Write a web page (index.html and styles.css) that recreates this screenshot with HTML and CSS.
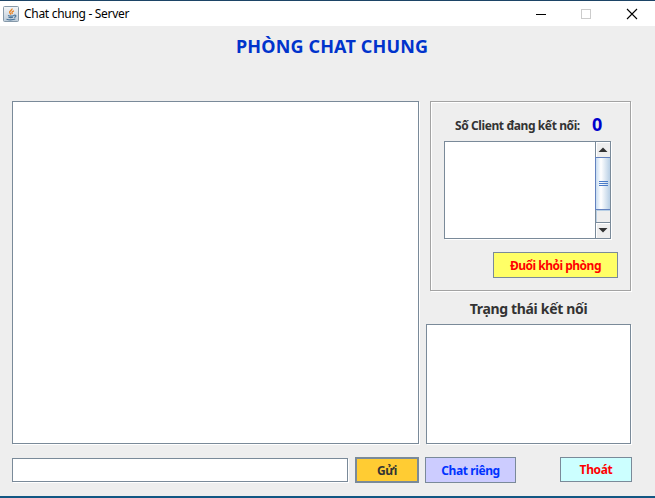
FILE: index.html
```
<!DOCTYPE html>
<html lang="vi">
<head>
<meta charset="utf-8">
<title>Chat chung - Server</title>
<link rel="stylesheet" href="styles.css">
</head>
<body>
<div class="window">
  <header class="titlebar">
    <svg class="java" width="16" height="16" viewBox="0 0 16 16">
      <defs><linearGradient id="g" x1="0" y1="0" x2="0" y2="1"><stop offset="0" stop-color="#f4f6f8"/><stop offset="1" stop-color="#bccbd8"/></linearGradient></defs>
      <rect x=".5" y=".5" width="15" height="15" rx="1" fill="url(#g)" stroke="#8699a9"/>
      <path d="M9 2.500c.6 2-3.300 2.300-2.300 4.200L8 8.500M11 4.800C8.800 5.500 8.600 6.300 9.400 8" fill="none" stroke="#e98324" stroke-width="1.300"/>
      <path d="M5 9.500c1.500.6 4.500.6 6 0M5.500 11.300c1.300.4 3.300.4 4.500 0M3.500 13.300c2.500.7 6.500.6 8.800-.2M11 9.200c2.700-.5 2.400 1.700.2 2.200" fill="none" stroke="#48749a" stroke-width="1.100"/>
    </svg>
    <span class="caption">Chat chung - Server</span>
    <svg class="controls" width="103" height="12" viewBox="0 0 103 12" fill="none">
      <path d="M0 6.500h10" stroke="#000"/>
      <rect x="45.500" y="1.500" width="9" height="9" stroke="#ccc"/>
      <path d="M91 1l10 10M101 1L91 11" stroke="#000" stroke-width="1.100"/>
    </svg>
  </header>
  <main class="content">
    <h1 class="heading">PHÒNG CHAT CHUNG</h1>
    <div class="columns">
      <div class="box messages"></div>
      <aside class="side">
        <section class="clients">
          <div class="count"><span class="count-label">Số Client đang kết nối:</span><span class="count-value">0</span></div>
          <div class="box list">
            <div class="scrollbar">
              <div class="arrow"><svg width="10" height="5" viewBox="0 0 10 5"><path d="M.5 5L5 .5 9.500 5z" fill="#333"/></svg></div>
              <div class="thumb"><i></i><i></i><i></i></div>
              <div class="track"></div>
              <div class="arrow down"><svg width="10" height="5" viewBox="0 0 10 5"><path d="M.5 0L5 4.500 9.500 0z" fill="#333"/></svg></div>
            </div>
          </div>
          <button class="btn kick"><span>Đuổi khỏi phòng</span></button>
        </section>
        <h2 class="status-title"><span>Trạng thái kết nối</span></h2>
        <div class="box status"></div>
      </aside>
    </div>
    <footer class="actions">
      <input class="box entry" type="text" aria-label="Tin nhắn">
      <button class="btn send"><span>Gửi</span></button>
      <button class="btn private"><span>Chat riêng</span></button>
      <button class="btn exit"><span>Thoát</span></button>
    </footer>
  </main>
</div>
</body>
</html>
```
FILE: styles.css
```
* { box-sizing: border-box; }
body { margin: 0; font-family: "Noto Sans", "Open Sans", sans-serif; overflow: hidden; }
.window {
  width: 655px; height: 498px; display: flex; flex-direction: column;
  background: #eee;
  border-top: 1px solid #1c4466;
}
.titlebar { height: 25px; background: #fff; display: flex; align-items: center; padding-left: 3px; }
.java { margin-right: 5px; }
.caption { font: 12px/16px "Noto Sans", sans-serif; letter-spacing: -.3px; color: #000; }
.controls { margin-left: auto; margin-right: 16px; }
.content {
  height: 472px; display: flex; flex-direction: column; padding: 0 23px 0 12px;
  border-bottom: 2px solid #125783;
}
.heading {
  margin: 0; height: 75px; padding: 8px 0 0 224px;
  font-size: 18px; line-height: 24px; font-weight: 700; letter-spacing: .15px; color: #0033cc; white-space: nowrap;
}
.columns { display: flex; justify-content: space-between; height: 343px; width: 619px; }
.box { background: #fff; border: 1px solid #7a8a99; box-shadow: 1px 1px 0 #fff; }
.messages { width: 407px; }
.side { width: 205px; display: flex; flex-direction: column; }
.clients {
  margin-left: 4px; width: 201px; height: 190px; padding: 12px 12px 12px 13px;
  border: 1px solid #a3a3a3; box-shadow: 1px 1px 0 #fff, inset 1px 1px 0 #fff;
  display: flex; flex-direction: column;
}
.count { height: 27px; padding-left: 11px; display: flex; align-items: flex-start; white-space: nowrap; color: #333; }
.count-label { width: 137px; font-size: 12px; line-height: 24px; font-weight: 700; letter-spacing: -.4px; }
.count-value { font-size: 18px; line-height: 20px; font-weight: 700; color: #0000cc; }
.list { width: 167px; height: 98px; display: flex; justify-content: flex-end; }
.scrollbar { width: 15px; border-left: 1px solid #7a8a99; display: flex; flex-direction: column; }
.arrow { height: 15px; background: #eee; display: flex; align-items: center; justify-content: center; box-shadow: inset 1px 1px 0 #fff; }
.thumb {
  height: 53px; margin-left: -1px; border: 1px solid #6382bf; border-right: 0;
  background: linear-gradient(90deg, #c8ddf2, #fff 35%, #b8cfe5);
  display: flex; flex-direction: column; align-items: center; justify-content: center; gap: 1px;
}
.thumb i { width: 9px; height: 1px; background: #4a7cc8; }
.track { flex: 1; background: #eee; box-shadow: inset 1px 1px 0 #b8cfe5; }
.down { height: 16px; border-top: 1px solid #7a8a99; }
.btn {
  border: 1px solid #7a8a99; padding: 1px 0 0; font: 700 12px/16px "Noto Sans", sans-serif;
  letter-spacing: -.5px; white-space: nowrap; text-align: center;
}
.kick { width: 125px; height: 26px; margin: 13px 0 0 49px; padding-top: 2px; background: #ffff66; color: #f00; }
.status-title {
  margin: 0; height: 33px; font-size: 14px; line-height: 36px; font-weight: 700; text-align: center;
  color: #333; letter-spacing: -.33px;
}
.status { height: 120px; }
.actions { display: flex; align-items: flex-start; padding-top: 13px; }
.entry { width: 336px; height: 24px; margin: 1px 7px 0 0; padding: 2px; border-radius: 0; outline: 0; }
.send { width: 64px; height: 26px; border-width: 2px; padding-top: 2px; background: #ffcc33; color: #333; margin-right: 6px; }
.private { width: 91px; height: 26px; padding-top: 2px; letter-spacing: -.4px; background: #ccccff; color: #0033ff; margin-right: 44px; }
.exit { width: 72px; height: 25px; letter-spacing: -.35px; background: #ccffff; color: #f00; }
```
